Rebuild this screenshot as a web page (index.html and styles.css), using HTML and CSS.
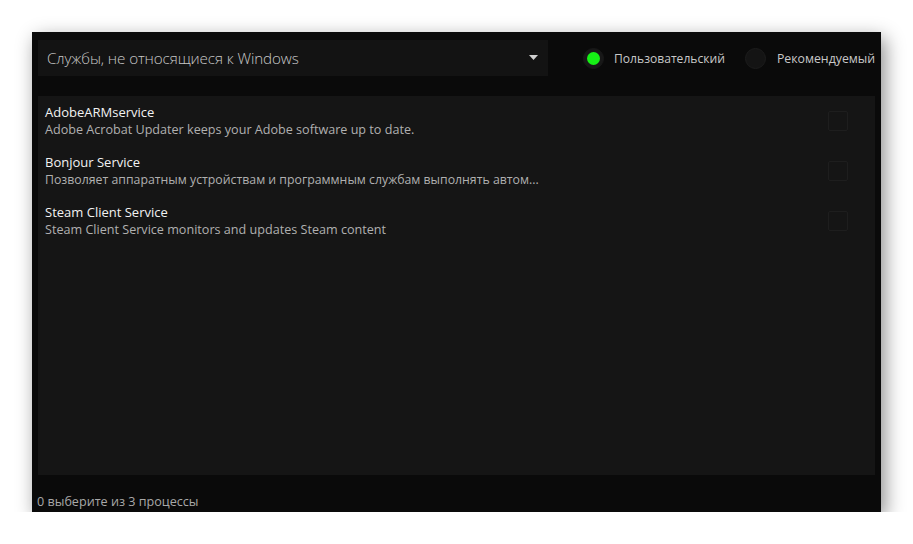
FILE: index.html
```html
<!DOCTYPE html>
<html lang="ru">
<head>
<meta charset="utf-8">
<link rel="stylesheet" href="styles.css">
</head>
<body>
<div class="window">
  <div class="header">
    <div class="dropdown">
      <span class="dropdown-text">Службы, не относящиеся к Windows</span>
      <svg class="arrow" width="9" height="5" viewBox="0 0 9 5"><path d="M0 0H9L4.5 5Z" fill="#d0d0d0"/></svg>
    </div>
    <div class="radios">
      <div class="radio on"><span class="dot"></span><span class="label">Пользовательский</span></div>
      <div class="radio"><span class="dot"></span><span class="label">Рекомендуемый</span></div>
    </div>
  </div>
  <div class="list">
    <div class="row">
      <div class="info"><div class="name">AdobeARMservice</div><div class="desc">Adobe Acrobat Updater keeps your Adobe software up to date.</div></div>
      <span class="check"></span>
    </div>
    <div class="row">
      <div class="info"><div class="name">Bonjour Service</div><div class="desc">Позволяет аппаратным устройствам и программным службам выполнять автом...</div></div>
      <span class="check"></span>
    </div>
    <div class="row">
      <div class="info"><div class="name">Steam Client Service</div><div class="desc">Steam Client Service monitors and updates Steam content</div></div>
      <span class="check"></span>
    </div>
  </div>
  <div class="footer">0 выберите из 3 процессы</div>
</div>
</body>
</html>
```
FILE: styles.css
```css
html, body { margin: 0; padding: 0; background: #ffffff; }
body { padding: 32px 0 0 32px; font-family: "Open Sans", "Noto Sans", sans-serif; }
.window {
  width: 849px; height: 480px; box-sizing: border-box;
  background: #0a0a0a;
  box-shadow: 4px 6px 18px rgba(0,0,0,0.45);
  padding: 8px 6px 0 6px;
  display: flex; flex-direction: column;
}
.header { display: flex; align-items: center; height: 36px; }
.dropdown {
  flex: 0 0 510px; height: 36px; box-sizing: border-box;
  background: #131313;
  display: flex; align-items: center; justify-content: space-between;
  padding: 0 10px 0 9px;
}
.dropdown-text { color: #c8c8c8; font-size: 15.2px; font-weight: 300; letter-spacing: -0.1px; }
.arrow { display: block; margin-top: -2px; }
.radios { display: flex; align-items: center; margin-left: 35px; gap: 20px; flex: none; }
.radio { display: flex; align-items: center; gap: 10px; }
.radio:last-child { gap: 11px; }
.dot {
  width: 21px; height: 21px; box-sizing: border-box; border-radius: 50%;
  background: #141414; border: 1px solid #1c1c1c; position: relative;
}
.radio.on .dot { background: #181818; border-color: #181818; }
.radio.on .dot::after {
  content: ""; position: absolute; left: 3px; top: 3px; width: 13px; height: 13px;
  border-radius: 50%; background: #16f016;
}
.label { color: #c8c8c8; font-size: 12.1px; }
.radio:last-child .label { font-size: 12.3px; }
.list {
  margin-top: 20px; height: 379px; background: #151515;
  padding-top: 8px; box-sizing: border-box;
}
.row { display: flex; justify-content: space-between; align-items: flex-start; height: 50px; padding-left: 7px; }
.name { color: #f2f2f2; font-size: 13px; line-height: 17px; }
.desc { color: #b0b0b0; font-size: 12.6px; line-height: 17px; }
.row:nth-child(2) .desc { font-size: 12.3px; }
.check {
  width: 20px; height: 20px; box-sizing: border-box; border: 1px solid #1e1e1e;
  border-radius: 2px; margin: 7px 27px 0 0; background: #151515;
}
.footer { color: #a8a8a8; font-size: 12.6px; padding: 18px 0 0 0; margin-left: -1px; }
```
